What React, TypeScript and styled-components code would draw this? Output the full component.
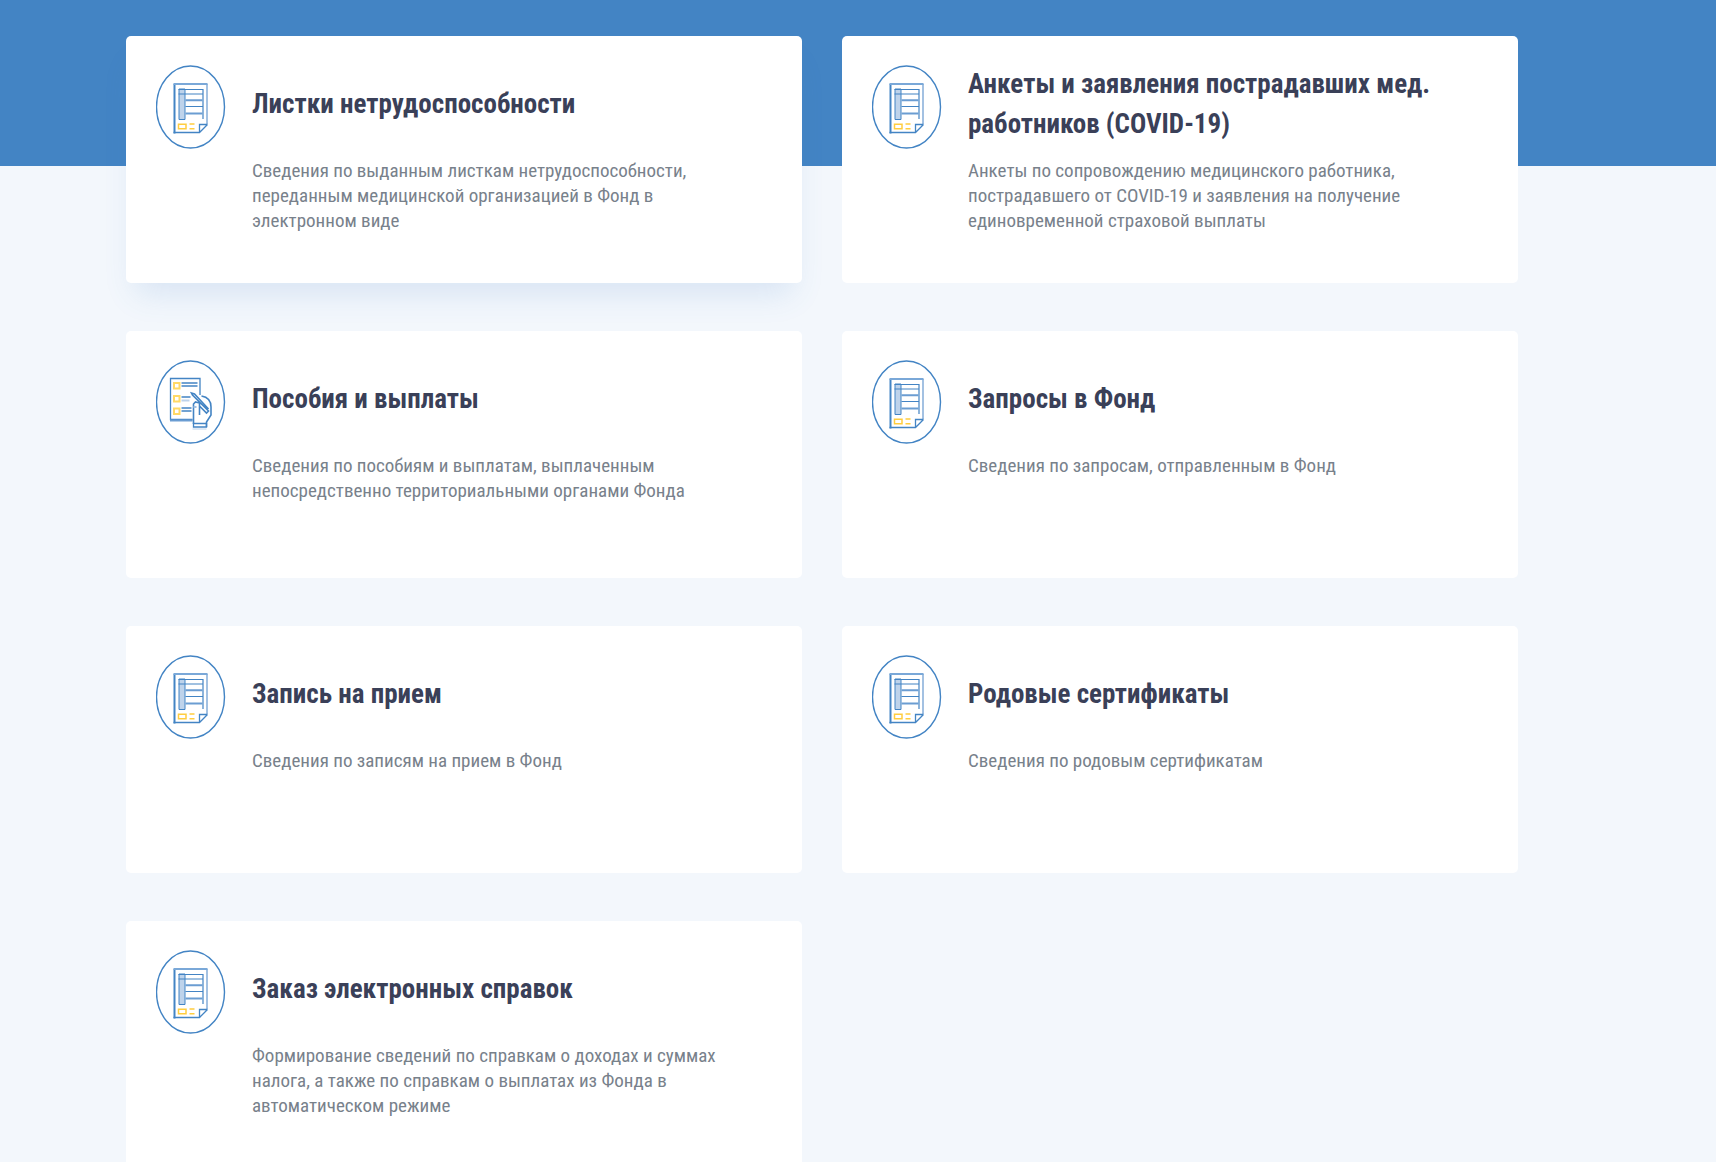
import React from "react";
import styled, { createGlobalStyle } from "styled-components";

const GlobalStyle = createGlobalStyle`
  *, *::before, *::after { box-sizing: border-box; }
  body {
    margin: 0;
    background: #f3f7fc;
    font-family: "Roboto Condensed", "Liberation Sans Narrow", Roboto, sans-serif;
  }
`;

const Page = styled.main`
  min-height: 100vh;
  padding: 36px 198px 36px 126px;
  background: linear-gradient(#4384c4 166px, #f3f7fc 166px);
`;

const Grid = styled.div`
  display: grid;
  grid-template-columns: repeat(2, minmax(0, 1fr));
  gap: 48px 40px;
`;

const Card = styled.a<{ $raised?: boolean }>`
  display: grid;
  grid-template-columns: 70px minmax(0, 1fr);
  grid-template-rows: 85px auto;
  column-gap: 26px;
  row-gap: 9px;
  min-height: 247px;
  padding: 28px 60px 40px 30px;
  border-radius: 5px;
  background: #fff;
  color: inherit;
  text-decoration: none;
  box-shadow: ${(p) => (p.$raised ? "0 20px 30px -10px rgba(67, 132, 196, 0.16)" : "none")};
`;

const IconBox = styled.span`
  display: flex;
  align-self: end;
  width: 70px;
  height: 84px;

  svg { width: 100%; height: 100%; }
`;

const Title = styled.h2`
  display: flex;
  align-items: center;
  align-self: start;
  min-height: 80px;
  margin: 0;
  color: #3a4058;
  font-size: 27px;
  font-weight: 700;
  line-height: 40px;
`;

const Description = styled.p`
  grid-column: 2;
  margin: 0;
  color: #78818b;
  font-size: 19px;
  line-height: 25px;
`;

const Oval = () => <ellipse cx="35" cy="42" rx="34" ry="41" strokeWidth="1.4" />;

const FormIcon = () => (
  <svg viewBox="0.5 0 70 84" fill="none" stroke="#4384c4" aria-hidden="true">
    <Oval />
    <path d="M19 68.5V19" strokeWidth="2" />
    <path d="M51.5 59V19" stroke="#a3c1e2" strokeWidth="2" />
    <path d="M18 19H52" stroke="#7aa8d8" strokeWidth="2" />
    <path d="M18 67.5H44L52 59.5M44 67.5V59.5H52" strokeWidth="1.3" />
    <path d="M23.5 24V54.5H29.5V24Z" fill="#bed3eb" />
    <path d="M23 24.5H47.5V54M23 29H47M30 41.5H47" strokeWidth="1.2" />
    <path d="M30 35.2H47M30 48.5H47" strokeWidth="2" stroke="#6b9dd2" />
    <path d="M23 59.2H30.5V63.8H23ZM34 59H39M34 63.8H39" stroke="#ffcd3f" strokeWidth="1.5" />
  </svg>
);

const ChecklistIcon = () => (
  <svg viewBox="0.5 0 70 84" fill="none" stroke="#4384c4" aria-hidden="true">
    <Oval />
    <path d="M37 59.5H15V18.5H44.5V35" strokeWidth="1.3" />
    <path d="M14.5 60.5H37" stroke="#6b9dd2" strokeWidth="2" />
    <path d="M18.5 23H24V28.5H18.5ZM18.5 36H24V41.5H18.5ZM18.5 48.5H24V54H18.5Z" stroke="#ffd966" strokeWidth="2" />
    <path d="M26 23H42M26 26H42M26 37H35M26 48H36M26 51H36" strokeWidth="1.3" />
    <path d="M26 40.5H34" stroke="#bed3eb" strokeWidth="2" />
    <path
      d="M38 64V44L40 42L44 43V55M44 46L51 53L53 51L37 35L36 33L39 34L53 49M46 36C52 37 55.5 41 55.5 47V55L51 62V67"
      strokeWidth="1.6"
    />
    <path d="M38 46H41V48H38Z" fill="#a3c1e2" stroke="none" />
    <path d="M38 63.5H51V67H38Z" strokeWidth="1.3" />
    <path d="M37 69H51" stroke="#bed3eb" />
  </svg>
);

type Service = {
  title: string;
  text: string;
  checklist?: boolean;
  raised?: boolean;
};

const services: Service[] = [
  {
    title: "Листки нетрудоспособности",
    text: "Сведения по выданным листкам нетрудоспособности, переданным медицинской организацией в Фонд в электронном виде",
    raised: true,
  },
  {
    title: "Анкеты и заявления пострадавших мед. работников (COVID-19)",
    text: "Анкеты по сопровождению медицинского работника, пострадавшего от COVID-19 и заявления на получение единовременной страховой выплаты",
  },
  {
    title: "Пособия и выплаты",
    text: "Сведения по пособиям и выплатам, выплаченным непосредственно территориальными органами Фонда",
    checklist: true,
  },
  { title: "Запросы в Фонд", text: "Сведения по запросам, отправленным в Фонд" },
  { title: "Запись на прием", text: "Сведения по записям на прием в Фонд" },
  { title: "Родовые сертификаты", text: "Сведения по родовым сертификатам" },
  {
    title: "Заказ электронных справок",
    text: "Формирование сведений по справкам о доходах и суммах налога, а также по справкам о выплатах из Фонда в автоматическом режиме",
  },
];

export default function App() {
  return (
    <>
      <GlobalStyle />
      <Page>
        <Grid>
          {services.map((s) => (
            <Card key={s.title} href="#" $raised={s.raised}>
              <IconBox>{s.checklist ? <ChecklistIcon /> : <FormIcon />}</IconBox>
              <Title>{s.title}</Title>
              <Description>{s.text}</Description>
            </Card>
          ))}
        </Grid>
      </Page>
    </>
  );
}
